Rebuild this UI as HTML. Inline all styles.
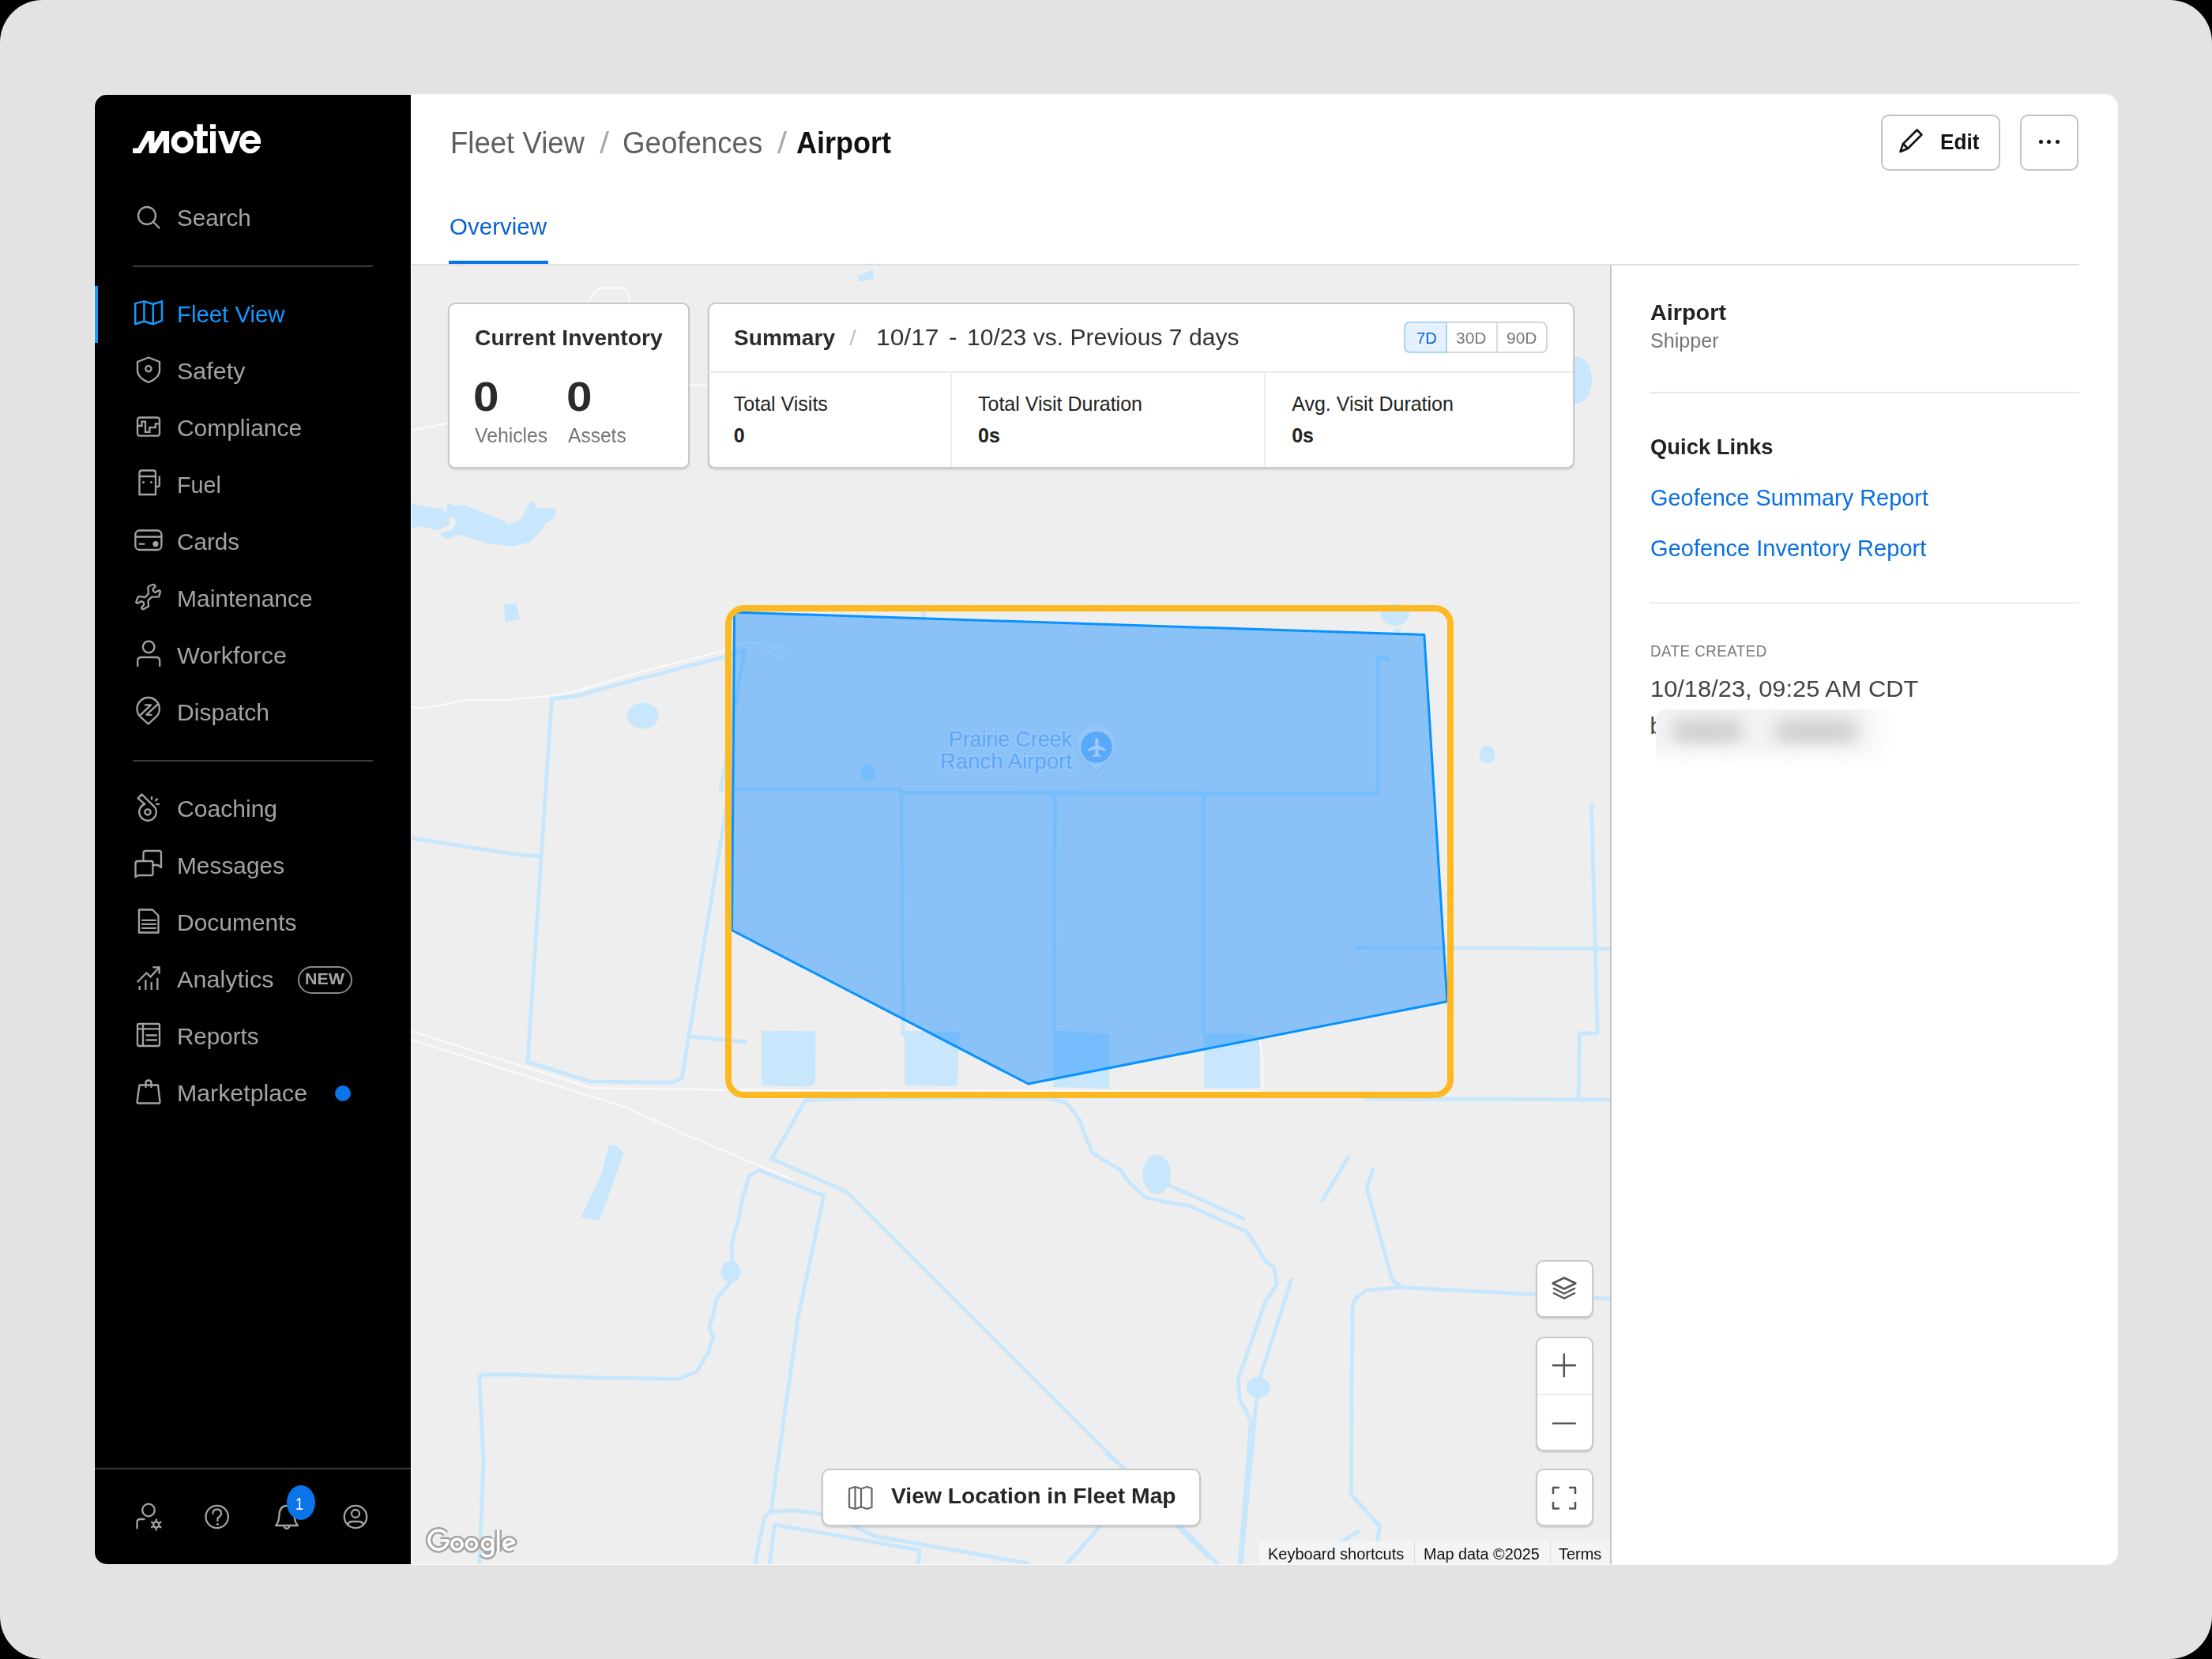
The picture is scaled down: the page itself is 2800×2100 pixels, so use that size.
<!DOCTYPE html>
<html><head><meta charset="utf-8">
<style>
*{margin:0;padding:0;box-sizing:border-box}
html,body{width:2800px;height:2100px;overflow:hidden;background:#000;font-family:"Liberation Sans",sans-serif}
.abs{position:absolute}
.t{position:absolute;white-space:nowrap;line-height:1}
svg{overflow:visible}
</style></head><body>
<div class="abs" style="left:0;top:0;width:2800px;height:2100px;background:#e3e3e3;border-radius:54px"></div>
<div class="abs" style="left:119px;top:119px;width:2562px;height:1862px;background:#fafafa;border-radius:16px"></div>
<div class="abs" style="left:120px;top:120px;width:2560px;height:1860px;background:#fff;border-radius:15px;overflow:hidden"></div>
<div class="abs" style="left:120px;top:120px;width:400px;height:1860px;background:#000;border-radius:15px 0 0 15px"></div>
<svg class="abs" style="left:0;top:0" width="520" height="2100" viewBox="0 0 520 2100">
<g fill="#fff">
<polygon points="168.1,187.6 174.6,187.6 186.4,166.1 195.4,166.1 195.4,181.3 204.3,166.1 214.1,166.1 214.1,193.9 207,193.9 206.8,176.9 196.6,193.9 188.9,193.9 188.1,177.7 178.3,193.9 168.1,193.9"/>
<rect x="249.3" y="157.2" width="7.5" height="36.7"/><rect x="245.4" y="166.1" width="17.5" height="6"/><rect x="249.3" y="187.6" width="13.6" height="6.3"/>
<rect x="266" y="157.2" width="7.1" height="5.8"/><rect x="266" y="166.1" width="7.1" height="27.8"/>
<polygon points="276,166.1 284.1,166.1 290.2,183.4 296.3,166.1 304.4,166.1 293.9,193.9 286.1,193.9"/>
</g>
<circle cx="230.8" cy="180" r="10.5" fill="none" stroke="#fff" stroke-width="7.4"/>
<ellipse cx="316.7" cy="179.9" rx="13.5" ry="14.4" fill="#fff"/>
<path d="M311,176.9 A5.85,4.9 0 0 1 322.7,176.9 Z" fill="#000"/>
<path d="M311,182.1 L331,182.1 L331,185 L322.2,185 A5.85,5.7 0 0 1 311,182.1 Z" fill="#000"/>
<g fill="none" stroke="#a3a3a3" stroke-width="2.3" stroke-linejoin="round" stroke-linecap="round"><circle cx="186" cy="273" r="11"/><line x1="194.5" y1="281.5" x2="201.5" y2="288.5"/></g>
<g fill="none" stroke="#1499ff" stroke-width="2.5" stroke-linejoin="round"><polygon points="171.2,384.1 182.4,381.4 193.8,385 205,381.4 205,405.8 193.8,410.3 182.4,406.7 171.2,410.3"/><line x1="182.4" y1="381.4" x2="182.4" y2="406.7"/><line x1="193.8" y1="385" x2="193.8" y2="410.3"/></g>
<g fill="none" stroke="#a3a3a3" stroke-width="2.3" stroke-linejoin="round" stroke-linecap="round"><path d="M174,458 L188,452.5 L202,458 L202,469 Q202,478 188,484 Q174,478 174,469 Z"/><circle cx="187.9" cy="466.8" r="3.6"/></g>
<g fill="none" stroke="#a3a3a3" stroke-width="2.3" stroke-linejoin="round" stroke-linecap="round"><rect x="174" y="528.5" width="28" height="23.2" rx="3"/><polyline points="174.2,539 179.5,539 179.5,533.7 184,533.7 184,546.8 189.4,546.8 189.4,541.2 196.8,541.2 196.8,536.4 201.8,536.4" stroke-linejoin="miter" stroke-linecap="butt"/></g>
<g fill="none" stroke="#a3a3a3" stroke-width="2.3" stroke-linejoin="round" stroke-linecap="round"><path d="M176.5,626 L176.5,598.5 Q176.5,595.5 179.5,595.5 L194,595.5 Q197,595.5 197,598.5 L197,626 Z" stroke-linejoin="miter"/><line x1="176.5" y1="603" x2="197" y2="603"/><path d="M197,616 L199.5,616 Q201.8,616 201.8,613.5 L201.8,602.5" stroke-linecap="butt"/></g>
<g fill="#a3a3a3"><rect x="180.2" y="609.2" width="2.6" height="2.6"/><rect x="190.2" y="609.2" width="2.6" height="2.6"/></g>
<g fill="none" stroke="#a3a3a3" stroke-width="2.3" stroke-linejoin="round" stroke-linecap="round"><rect x="171.4" y="671.5" width="33" height="24.5" rx="5"/><line x1="171.4" y1="679.5" x2="204.4" y2="679.5"/><line x1="176.5" y1="688.6" x2="182.5" y2="688.6"/></g><circle cx="196.9" cy="688.6" r="3.6" fill="#a3a3a3"/>
<g fill="none" stroke="#a3a3a3" stroke-width="2.3" stroke-linejoin="round" stroke-linecap="round"><path d="M194.4,739.8 Q196,740.5 196.8,742.2 L193.9,745.1 Q193.3,747 194.5,748.6 Q195.5,750 196.5,749.9 L200.7,747.5 Q202.5,747.2 203,748.6 L201.2,755.3 L192,755.7 L187.4,760.1 L188.1,767.6 L181.4,771.2 Q179.3,770.8 179,769.2 L181.9,765.9 Q182.6,763.3 181.6,762.5 Q180,761 178.5,761.3 L174.4,763.5 Q172.5,763.5 172.2,762.5 L174.2,756.5 Q175,755 176.6,754.8 L183.6,756.2 L188.1,751.4 L187.2,743.7 Q188.4,741.5 190.6,741 Z"/></g>
<g fill="none" stroke="#a3a3a3" stroke-width="2.3" stroke-linejoin="round" stroke-linecap="round"><circle cx="188.2" cy="819" r="7.3"/><path d="M174.2,843 L174.2,836.5 Q174.2,832 178.7,832 L197.7,832 Q202.2,832 202.2,836.5 L202.2,843"/></g>
<g fill="none" stroke="#a3a3a3" stroke-width="2.3" stroke-linejoin="round" stroke-linecap="round"><path d="M187.7,916.5 L177.6,907.2 A14.2,14.2 0 1 1 197.8,907.2 Z"/><path d="M178,904.8 L190.5,892.9 M184,892.4 L191,892.4 M185.6,904.4 L199.4,891.8 M185.6,904.8 L191.6,904.8"/></g>
<g fill="none" stroke="#a3a3a3" stroke-width="2.3" stroke-linejoin="round" stroke-linecap="butt"><path d="M174.6,1010.4 L179.5,1005.5 L195.8,1021.6 A10.8,10.8 0 1 1 183.2,1017.8 Z"/><circle cx="187" cy="1027.9" r="3.6"/><line x1="192" y1="1008.2" x2="192" y2="1012.6"/><line x1="196.3" y1="1014" x2="199.6" y2="1010.7"/><line x1="197.4" y1="1017.8" x2="201.8" y2="1017.8"/></g>
<g fill="none" stroke="#a3a3a3" stroke-width="2.3" stroke-linejoin="round" stroke-linecap="round"><path d="M181.5,1090 L181.5,1080 Q181.5,1077 184.5,1077 L201.5,1077 Q204,1077 204,1079.5 L204,1098 L200,1095 L193,1095"/><path d="M171.5,1110 L171.5,1093 Q171.5,1090 174.5,1090 L191.5,1090 Q193.5,1090 193.5,1092 L193.5,1106 Q193.5,1108 191.5,1108 L175,1108 Z"/></g>
<g fill="none" stroke="#a3a3a3" stroke-width="2.3" stroke-linejoin="round" stroke-linecap="round"><path d="M176,1180.5 L176,1151.5 L193,1151.5 L200.5,1159 L200.5,1180.5 Z"/><line x1="180" y1="1164.8" x2="197" y2="1164.8"/><line x1="180" y1="1169.8" x2="197" y2="1169.8"/><line x1="180" y1="1174.8" x2="197" y2="1174.8"/></g>
<g fill="none" stroke="#a3a3a3" stroke-width="2.3" stroke-linejoin="round" stroke-linecap="butt"><polyline points="173.7,1243.2 185.5,1231.5 190.5,1236.5 200.8,1225.2" stroke-linejoin="miter"/><polyline points="193.2,1224.4 201.6,1224.4 201.6,1232.8" stroke-linejoin="miter"/><line x1="176.7" y1="1248" x2="176.7" y2="1253"/><line x1="184.4" y1="1240.4" x2="184.4" y2="1253"/><line x1="191.7" y1="1243.2" x2="191.7" y2="1253"/><line x1="199.3" y1="1238" x2="199.3" y2="1253"/></g>
<g fill="none" stroke="#a3a3a3" stroke-width="2.3" stroke-linejoin="round" stroke-linecap="round"><rect x="174" y="1296" width="28" height="28" rx="2"/><line x1="174" y1="1302.3" x2="202" y2="1302.3"/><line x1="181" y1="1296" x2="181" y2="1324"/><line x1="185.5" y1="1310.5" x2="198" y2="1310.5"/><line x1="185.5" y1="1316.5" x2="198" y2="1316.5"/></g>
<g fill="none" stroke="#a3a3a3" stroke-width="2.3" stroke-linejoin="round" stroke-linecap="round"><path d="M176.5,1373.5 L200,1373.5 L202.5,1395 Q202.5,1396.5 201,1396.5 L175,1396.5 Q173.5,1396.5 173.5,1395 Z"/><path d="M184.5,1376 L184.5,1371 Q184.5,1367.5 188,1367.5 Q191.5,1367.5 191.5,1371 L191.5,1376"/></g>
<g fill="none" stroke="#a3a3a3" stroke-width="2.3" stroke-linejoin="round" stroke-linecap="round"><circle cx="188" cy="1911.5" r="7.8"/><path d="M173.5,1934.5 L173.5,1927 Q173.5,1923 177.5,1923 L182.5,1923"/></g>
<g fill="none" stroke="#a3a3a3" stroke-width="2.3"><circle cx="197.7" cy="1930" r="3.6"/></g>
<g stroke="#a3a3a3" stroke-width="2.3" stroke-linecap="round"><line x1="200.82" y1="1931.80" x2="203.42" y2="1933.30"/><line x1="197.70" y1="1933.60" x2="197.70" y2="1936.60"/><line x1="194.58" y1="1931.80" x2="191.98" y2="1933.30"/><line x1="194.58" y1="1928.20" x2="191.98" y2="1926.70"/><line x1="197.70" y1="1926.40" x2="197.70" y2="1923.40"/><line x1="200.82" y1="1928.20" x2="203.42" y2="1926.70"/></g>
<g fill="none" stroke="#a3a3a3" stroke-width="2.3" stroke-linejoin="round" stroke-linecap="round"><circle cx="274.7" cy="1920" r="14.2"/><path d="M269.5,1916 Q269.5,1910.5 274.7,1910.5 Q280,1910.5 280,1915.5 Q280,1919 275.5,1921.5 L275.5,1925"/></g><circle cx="275.5" cy="1929.5" r="1.6" fill="#a3a3a3"/>
<g fill="none" stroke="#a3a3a3" stroke-width="2.3" stroke-linejoin="round" stroke-linecap="round"><path d="M349,1931 Q352.5,1927.5 353,1922 L353.5,1917 Q354.5,1906 363,1906 Q371.5,1906 372.5,1917 L373,1922 Q373.5,1927.5 377,1931 Z"/><path d="M359.5,1931.5 Q360.5,1935 363,1935 Q365.5,1935 366.5,1931.5"/></g>
<g fill="none" stroke="#a3a3a3" stroke-width="2.3" stroke-linejoin="round" stroke-linecap="round"><circle cx="450" cy="1920" r="14.2"/><circle cx="450" cy="1916" r="5"/><path d="M440,1930.5 Q441,1926 446,1926 L454,1926 Q459,1926 460,1930.5"/></g>
</svg>
<div class="t" style="left:224.30px;top:261.65px;font-size:29.00px;color:#a3a3a3;transform:scaleX(1.0208);transform-origin:0 0;">Search</div>
<div class="abs" style="left:168.00px;top:336.00px;width:304.00px;height:2.00px;background:#3a3a3a;"></div>
<div class="abs" style="left:120.00px;top:362.00px;width:4.00px;height:72.00px;background:#1499ff;"></div>
<div class="t" style="left:224.30px;top:383.65px;font-size:29.00px;color:#1499ff;transform:scaleX(1.0121);transform-origin:0 0;">Fleet View</div>
<div class="t" style="left:224.30px;top:455.75px;font-size:29.00px;color:#a3a3a3;transform:scaleX(1.0509);transform-origin:0 0;">Safety</div>
<div class="t" style="left:224.30px;top:527.75px;font-size:29.00px;color:#a3a3a3;transform:scaleX(1.0324);transform-origin:0 0;">Compliance</div>
<div class="t" style="left:224.30px;top:599.65px;font-size:29.00px;color:#a3a3a3;transform:scaleX(0.9926);transform-origin:0 0;">Fuel</div>
<div class="t" style="left:224.30px;top:671.65px;font-size:29.00px;color:#a3a3a3;transform:scaleX(1.0225);transform-origin:0 0;">Cards</div>
<div class="t" style="left:224.30px;top:743.75px;font-size:29.00px;color:#a3a3a3;transform:scaleX(1.0340);transform-origin:0 0;">Maintenance</div>
<div class="t" style="left:224.30px;top:815.65px;font-size:29.00px;color:#a3a3a3;transform:scaleX(1.0569);transform-origin:0 0;">Workforce</div>
<div class="t" style="left:224.30px;top:887.75px;font-size:29.00px;color:#a3a3a3;transform:scaleX(1.0378);transform-origin:0 0;">Dispatch</div>
<div class="t" style="left:224.30px;top:1009.55px;font-size:29.00px;color:#a3a3a3;transform:scaleX(1.0373);transform-origin:0 0;">Coaching</div>
<div class="t" style="left:224.30px;top:1081.55px;font-size:29.00px;color:#a3a3a3;transform:scaleX(1.0297);transform-origin:0 0;">Messages</div>
<div class="t" style="left:224.30px;top:1153.65px;font-size:29.00px;color:#a3a3a3;transform:scaleX(1.0329);transform-origin:0 0;">Documents</div>
<div class="t" style="left:224.30px;top:1225.55px;font-size:29.00px;color:#a3a3a3;transform:scaleX(1.0556);transform-origin:0 0;">Analytics</div>
<div class="t" style="left:224.30px;top:1297.65px;font-size:29.00px;color:#a3a3a3;transform:scaleX(1.0202);transform-origin:0 0;">Reports</div>
<div class="t" style="left:224.30px;top:1369.65px;font-size:29.00px;color:#a3a3a3;transform:scaleX(1.0452);transform-origin:0 0;">Marketplace</div>
<div class="abs" style="left:168.00px;top:962.00px;width:304.00px;height:2.00px;background:#3a3a3a;"></div>
<div class="abs" style="left:377px;top:1222.5px;width:68.5px;height:35.5px;border:2px solid #8a8a8a;border-radius:18px"></div>
<div class="t" style="left:385.50px;top:1229.37px;font-size:20.00px;color:#a3a3a3;font-weight:700;transform:scaleX(1.0716);transform-origin:0 0;">NEW</div>
<div class="abs" style="left:423.7px;top:1374px;width:20px;height:20px;border-radius:50%;background:#0a74e8"></div>
<div class="abs" style="left:120.00px;top:1858.00px;width:400.00px;height:2.00px;background:#3a3a3a;"></div>
<div class="abs" style="left:363px;top:1880px;width:36px;height:44px;border-radius:50%;background:#0a74e8"></div>
<div class="t" style="left:373.50px;top:1892.87px;font-size:22.00px;color:#fff;transform:scaleX(0.8173);transform-origin:0 0;">1</div>
<div class="t" style="left:569.50px;top:161.73px;font-size:38.00px;color:#5f5f5f;transform:scaleX(0.9620);transform-origin:0 0;">Fleet View</div>
<div class="t" style="left:759.00px;top:161.73px;font-size:38.00px;color:#ababab;transform:scaleX(1.1367);transform-origin:0 0;">/</div>
<div class="t" style="left:787.50px;top:161.73px;font-size:38.00px;color:#5f5f5f;transform:scaleX(0.9642);transform-origin:0 0;">Geofences</div>
<div class="t" style="left:984.00px;top:161.73px;font-size:38.00px;color:#ababab;transform:scaleX(1.1367);transform-origin:0 0;">/</div>
<div class="t" style="left:1008.00px;top:161.73px;font-size:38.00px;color:#111111;font-weight:700;transform:scaleX(0.9474);transform-origin:0 0;">Airport</div>
<div class="t" style="left:569.00px;top:272.65px;font-size:29.00px;color:#0b5fd2;transform:scaleX(1.0177);transform-origin:0 0;">Overview</div>
<div class="abs" style="left:521.00px;top:333.50px;width:2111.00px;height:2.00px;background:#dedede;"></div>
<div class="abs" style="left:568.00px;top:330.00px;width:126.00px;height:4.00px;background:#0a72e8;"></div>
<div class="abs" style="left:2380.5px;top:144.5px;width:151px;height:71px;border:2px solid #c4c4c4;border-radius:10px"></div>
<svg class="abs" style="left:2380px;top:140px" width="80" height="80" viewBox="2380 140 80 80"><g fill="none" stroke="#111" stroke-width="2.6" stroke-linejoin="round"><path d="M2405.5,192 L2409,182 L2426.5,164.5 L2432.5,170.5 L2415,188 Z"/><line x1="2409" y1="182" x2="2415" y2="188"/></g></svg>
<div class="t" style="left:2456.00px;top:165.89px;font-size:28.00px;color:#111111;font-weight:700;transform:scaleX(0.9341);transform-origin:0 0;">Edit</div>
<div class="abs" style="left:2556.5px;top:144.5px;width:74.5px;height:71px;border:2px solid #c4c4c4;border-radius:10px"></div>
<div class="abs" style="left:2580.9px;top:177.3px;width:5px;height:5px;border-radius:50%;background:#111"></div>
<div class="abs" style="left:2591.4px;top:177.3px;width:5px;height:5px;border-radius:50%;background:#111"></div>
<div class="abs" style="left:2601.7px;top:177.3px;width:5px;height:5px;border-radius:50%;background:#111"></div>
<div class="abs" style="left:521.00px;top:335.50px;width:1517.00px;height:1644.50px;background:#eeeeee;"></div>
<svg class="abs" style="left:521px;top:336px;overflow:hidden" width="1517" height="1644" viewBox="521 336 1517 1644">
<g fill="#c8e7fc"><polygon points="520.0,637.2 551.5,643.7 556.7,642.4 564.0,648.2 567.2,636.7 576.4,640.3 585.5,638.5 632.7,656.9 644.5,663.9 659.0,657.6 672.0,634.6 679.4,637.2 677.3,643.0 701.0,643.2 704.3,647.2 702.7,655.5 690.4,662.9 687.8,668.1 671.3,685.7 649.8,691.7 619.6,688.3 579.0,676.5 566.7,683.0 556.7,676.5 559.3,674.4 572.4,670.0 577.2,662.9 575.0,655.5 568.5,653.5 569.3,664.0 553.6,671.8 535.7,666.6 520.0,667.9"/><polygon points="638,765.7 653.7,763.6 658.2,784 639.3,788"/><ellipse cx="813.7" cy="906" rx="20" ry="16.5"/><polygon points="770.7,1448.7 780.4,1450.5 789.5,1459.6 758.7,1545.7 735.2,1541 760.6,1488.5"/><polygon points="1085,350 1105,341 1106,353 1088,357"/><ellipse cx="1995" cy="481" rx="20" ry="30"/><ellipse cx="1882.5" cy="955.3" rx="10" ry="11"/><ellipse cx="1766" cy="778" rx="18" ry="14"/><ellipse cx="1464.3" cy="1486.7" rx="18" ry="25"/><ellipse cx="925.1" cy="1609.7" rx="12" ry="14"/><ellipse cx="1592.7" cy="1756" rx="15" ry="13"/><ellipse cx="1099" cy="978" rx="9.5" ry="11"/><rect x="1765" y="796" width="8" height="7"/><rect x="1166" y="774" width="6" height="8"/><polygon points="964.2,1304.7 1032.4,1305.5 1032,1370 1025,1376 964.2,1374"/><polygon points="1145.2,1304.7 1214.7,1306 1212,1375 1145.2,1374"/><polygon points="1333.2,1304 1404.3,1309 1404.3,1378 1333.2,1376"/><polygon points="1524.1,1308 1580,1308 1594.4,1315 1595,1377 1524.1,1377"/></g>
<g fill="none" stroke="#fbfbfb" stroke-width="2" stroke-linejoin="round"><polyline points="520,895 538.4,896.2 593.4,885.5 640.6,886.3 690.4,881.6 714,878.4 735,873.2 795.3,854.8 918.5,822.8"/><polyline points="520,1305.2 748,1377 921.5,1379.8 1594,1381"/><polyline points="520,1316 791.3,1401.5 863.6,1434.3 1004.7,1494"/><polyline points="520,544.9 567.3,535.7"/><polyline points="871.8,487.2 895.6,488.1"/><path d="M744.5,382.7 C750,372 755,365 762,364.4 L789.4,364.4 Q795,366 797.6,382.7"/><polyline points="1594.4,1315 1598,1340 1598,1381"/><path d="M929,818 Q940,812 960,814 L979,829 Q985,833 991,830 Q996,825 990,820 Q984,816 972,820" stroke-width="1.6"/></g>
<g fill="none" stroke="#c8e7fc" stroke-width="5" stroke-linejoin="round" stroke-linecap="round"><polyline points="942.3,822.6 918.5,831.2 821.5,856.1 782.2,866.6 735.0,879.7 698.3,885.0 667.9,1344.5 747.9,1369.0 851.0,1370.3 863.2,1364.9 929.0,965.0"/><polyline points="942.3,822.6 912.4,1000.7"/><polyline points="912.4,998.7 1138.7,998.7 1141.0,1003.0 1744.2,1004.8 1744.2,832.5 1757.0,834.0"/><polyline points="1140.9,1003.0 1143.0,1309.9"/><polyline points="1335.3,1005.0 1334.0,1307.7"/><polyline points="1523.7,1005.0 1523.7,1308.0"/><polyline points="520.0,1061.0 653.0,1081.4 682.8,1084.0"/><polyline points="872.7,1312.0 943.2,1318.8"/><polyline points="976.5,1466.8 993.9,1437.9 1019.2,1392.7 1049.0,1390.7 1325.0,1389.0 1350.4,1396.3 1366.7,1418.0 1372.1,1434.2 1383.0,1459.6 1397.4,1468.6 1419.1,1481.3 1428.2,1495.7 1449.8,1515.6 1473.4,1521.0 1505.9,1526.5 1578.2,1559.0 1589.0,1575.3 1601.7,1597.0 1612.6,1604.2 1616.2,1626.0 1601.7,1647.6 1567.4,1745.2 1569.2,1770.5 1583.6,1799.5 1569.2,1980.0"/><polyline points="976.5,1466.8 1071.6,1508.4 1422.7,1859.1 1542.0,1980.0"/><polyline points="1350.4,1980.0 1391.7,1932.7"/><polyline points="961.3,1481.3 1042.7,1513.8 1008.3,1676.6 1008.3,1683.5 976.0,1912.0 967.6,1920.5 955.7,1980.0"/><polyline points="961.3,1481.3 948.6,1488.5 939.6,1517.5 936.0,1539.0 928.8,1564.5 925.9,1577.0 927.0,1595.0 925.1,1609.7 923.3,1624.2 907.0,1644.0 903.4,1662.0 898.0,1680.0 902.7,1692.9 896.2,1712.8 881.7,1736.3 860.0,1745.4 737.0,1743.5 653.8,1740.0 612.2,1740.0 606.8,1741.7 612.2,1850.3 606.8,1980.0"/><polyline points="976.5,1913.5 1004.7,1911.7 1041.0,1917.0"/><polyline points="974.1,1980.0 980.5,1929.7 1164.0,1962.3 1162.2,1980.0"/><polyline points="1080.8,1931.5 1106.2,1944.2 1300.0,1978.6"/><polyline points="1391.7,1932.7 1351.0,1980.0"/><polyline points="1491.0,1932.7 1530.0,1971.0"/><polyline points="1400.7,1840.0 1423.3,1859.2"/><polyline points="1477.0,1499.3 1574.6,1542.7"/><polyline points="1706.6,1465.0 1674.0,1519.2"/><polyline points="1737.3,1481.3 1730.1,1504.8 1762.6,1620.5 1775.3,1629.5 1943.4,1638.5 2040.0,1644.0"/><polyline points="1775.3,1629.5 1730.1,1633.1 1715.6,1644.0 1712.0,1654.8 1710.2,1891.7 1746.4,1931.5 1739.2,1980.0"/><polyline points="1634.3,1620.5 1594.5,1745.2 1590.9,1766.9 1571.0,1980.0"/><polyline points="1719.5,1938.7 1650.8,1980.0"/><polyline points="2014.6,1018.0 2022.0,1308.0 1999.4,1308.0 1998.2,1388.0"/><polyline points="1718.0,1199.2 2038.0,1201.0"/><polyline points="1049.0,1388.0 1729.0,1388.0"/><polyline points="1729.0,1390.5 2038.0,1392.0"/></g>
</svg>
<svg class="abs" style="left:521px;top:336px;overflow:hidden" width="1517" height="1644" viewBox="521 336 1517 1644">
<polygon points="929.5,775 1802.8,803.4 1831.9,1267.8 1301.5,1372 926.5,1177.5" fill="rgba(30,144,255,0.48)" stroke="#0692ff" stroke-width="3" stroke-linejoin="round"/>
<path d="M1388,978 L1371.5,962 A24.5,24.5 0 1 1 1404.5,962 Z" fill="#7fb4ea" opacity="0.6" transform="translate(0,1.5)"/><path d="M1388,976 L1371,960.5 A24.4,24.4 0 1 1 1405,960.5 Z" fill="#92c5fa"/><circle cx="1388" cy="945.8" r="19.8" fill="#5aa9f8"/><g fill="#9ccbfa"><path d="M1388.3,934 Q1390.3,934 1390.3,936.5 L1390.3,943.5 L1399.5,948.5 L1399.5,951 L1390.3,948.5 L1390.3,954.5 L1393.5,956.5 L1393.5,958.5 L1388.3,957.3 L1383.1,958.5 L1383.1,956.5 L1386.3,954.5 L1386.3,948.5 L1377.1,951 L1377.1,948.5 L1386.3,943.5 L1386.3,936.5 Q1386.3,934 1388.3,934 Z"/></g>
<g font-family="Liberation Sans" font-size="28.5" fill="#5ea8f6" stroke="#93c5fa" stroke-width="5" stroke-linejoin="round" paint-order="stroke" text-anchor="end"><text x="1356.8" y="945.2" textLength="156" lengthAdjust="spacingAndGlyphs">Prairie Creek</text><text x="1356.8" y="973.1" textLength="167" lengthAdjust="spacingAndGlyphs">Ranch Airport</text></g>
<rect x="922" y="770" width="914" height="616" rx="19.5" fill="none" stroke="#fdb921" stroke-width="8"/>
</svg>
<div style="position:absolute;background:#fff;border:2px solid #c8c8c8;border-radius:9px;box-shadow:0 2px 2px rgba(0,0,0,0.12);left:567.3px;top:382.7px;width:305.4px;height:210px"></div>
<div class="t" style="left:600.60px;top:414.29px;font-size:28.00px;color:#2b2b2b;font-weight:700;transform:scaleX(1.0126);transform-origin:0 0;">Current Inventory</div>
<div class="t" style="left:599.40px;top:477.09px;font-size:51.50px;color:#2b2b2b;font-weight:700;transform:scaleX(1.1347);transform-origin:0 0;">0</div>
<div class="t" style="left:717.20px;top:477.09px;font-size:51.50px;color:#2b2b2b;font-weight:700;transform:scaleX(1.1347);transform-origin:0 0;">0</div>
<div class="t" style="left:601.00px;top:538.73px;font-size:25.00px;color:#767676;transform:scaleX(0.9901);transform-origin:0 0;">Vehicles</div>
<div class="t" style="left:718.80px;top:538.73px;font-size:25.00px;color:#767676;transform:scaleX(0.9823);transform-origin:0 0;">Assets</div>
<div style="position:absolute;background:#fff;border:2px solid #c8c8c8;border-radius:9px;box-shadow:0 2px 2px rgba(0,0,0,0.12);left:895.5px;top:382.7px;width:1097px;height:210px"></div>
<div class="abs" style="left:897.00px;top:470.00px;width:1094.00px;height:2.00px;background:#ececec;"></div>
<div class="abs" style="left:1202.60px;top:471.00px;width:2.00px;height:120.00px;background:#ececec;"></div>
<div class="abs" style="left:1600.00px;top:471.00px;width:2.00px;height:120.00px;background:#ececec;"></div>
<div class="t" style="left:928.80px;top:414.09px;font-size:28.00px;color:#2b2b2b;font-weight:700;transform:scaleX(1.0030);transform-origin:0 0;">Summary</div>
<div class="t" style="left:1075.00px;top:414.09px;font-size:28.00px;color:#c4c4c4;transform:scaleX(1.1570);transform-origin:0 0;">/</div>
<div class="t" style="left:1109.00px;top:413.25px;font-size:29.00px;color:#333333;transform:scaleX(1.0955);transform-origin:0 0;">10/17</div>
<div class="t" style="left:1201.00px;top:413.25px;font-size:29.00px;color:#333333;transform:scaleX(1.0871);transform-origin:0 0;">-</div>
<div class="t" style="left:1223.50px;top:413.25px;font-size:29.00px;color:#333333;transform:scaleX(1.0374);transform-origin:0 0;">10/23 vs. Previous 7 days</div>
<div class="abs" style="left:1777.4px;top:407.4px;width:181.6px;height:39.2px;border:2px solid #d6d6d6;border-radius:8px"></div>
<div class="abs" style="left:1777.4px;top:407.4px;width:54.5px;height:39.2px;border:2px solid #a8d3fb;border-radius:8px 0 0 8px;background:#e5f2fe"></div>
<div class="abs" style="left:1894.00px;top:409.00px;width:2.00px;height:36.00px;background:#dcdcdc;"></div>
<div class="t" style="left:1792.50px;top:416.52px;font-size:21.00px;color:#0b5fd2;transform:scaleX(0.9611);transform-origin:0 0;">7D</div>
<div class="t" style="left:1843.30px;top:416.52px;font-size:21.00px;color:#7a7a7a;transform:scaleX(0.9993);transform-origin:0 0;">30D</div>
<div class="t" style="left:1907.00px;top:416.52px;font-size:21.00px;color:#7a7a7a;transform:scaleX(0.9993);transform-origin:0 0;">90D</div>
<div class="t" style="left:928.80px;top:498.53px;font-size:25.00px;color:#222222;">Total Visits</div>
<div class="t" style="left:1238.00px;top:498.53px;font-size:25.00px;color:#222222;">Total Visit Duration</div>
<div class="t" style="left:1635.20px;top:498.53px;font-size:25.00px;color:#222222;">Avg. Visit Duration</div>
<div class="t" style="left:928.80px;top:538.73px;font-size:25.00px;color:#222222;font-weight:700;">0</div>
<div class="t" style="left:1238.00px;top:538.73px;font-size:25.00px;color:#222222;font-weight:700;">0s</div>
<div class="t" style="left:1635.20px;top:538.73px;font-size:25.00px;color:#222222;font-weight:700;">0s</div>
<div style="position:absolute;background:#fff;border:2px solid #c8c8c8;border-radius:10px;box-shadow:0 2px 2px rgba(0,0,0,0.12);left:1943.6px;top:1595.3px;width:73px;height:73px"></div>
<div style="position:absolute;background:#fff;border:2px solid #c8c8c8;border-radius:10px;box-shadow:0 2px 2px rgba(0,0,0,0.12);left:1943.6px;top:1691.6px;width:73px;height:145px"></div>
<div class="abs" style="left:1945.60px;top:1764.00px;width:69.00px;height:1.50px;background:#ececec;"></div>
<div style="position:absolute;background:#fff;border:2px solid #c8c8c8;border-radius:10px;box-shadow:0 2px 2px rgba(0,0,0,0.12);left:1943.6px;top:1859.3px;width:73px;height:73px"></div>
<div style="position:absolute;background:#fff;border:2px solid #c8c8c8;border-radius:10px;box-shadow:0 2px 2px rgba(0,0,0,0.12);left:1040.2px;top:1859.2px;width:480px;height:73px"></div>
<svg class="abs" style="left:1940px;top:1590px" width="80" height="350" viewBox="1940 1590 80 350"><g fill="none" stroke="#555" stroke-width="2.5" stroke-linejoin="round">
<path d="M1980,1617.5 L1994.5,1624.5 L1980,1631.5 L1965.5,1624.5 Z"/><path d="M1966,1630.5 L1980,1637.5 L1994,1630.5"/><path d="M1966,1636.5 L1980,1643.5 L1994,1636.5"/>
<line x1="1964.8" y1="1728.3" x2="1994.8" y2="1728.3"/><line x1="1979.8" y1="1713.3" x2="1979.8" y2="1743.3"/>
<line x1="1964.8" y1="1801.8" x2="1994.8" y2="1801.8"/>
<path d="M1966,1891 L1966,1883 L1974,1883 M1986,1883 L1994,1883 L1994,1891 M1994,1901 L1994,1909.5 L1986,1909.5 M1974,1909.5 L1966,1909.5 L1966,1901"/>
</g></svg>
<svg class="abs" style="left:1070px;top:1875px" width="40" height="40" viewBox="1070 1875 40 40"><g fill="none" stroke="#666" stroke-width="2.2" stroke-linejoin="round"><path d="M1075,1884.5 L1082.5,1882 L1090,1884.5 L1097.5,1882 L1103.5,1884 L1103.5,1908 L1097.5,1910 L1090,1907.5 L1082.5,1910 L1075,1908 Z"/><line x1="1082.5" y1="1882" x2="1082.5" y2="1910"/><line x1="1090" y1="1884.5" x2="1090" y2="1907.5"/></g></svg>
<div class="t" style="left:1127.60px;top:1880.29px;font-size:28.00px;color:#262626;font-weight:700;transform:scaleX(1.0092);transform-origin:0 0;">View Location in Fleet Map</div>
<div class="abs" style="left:1593.80px;top:1951.20px;width:444.20px;height:28.80px;background:rgba(245,245,245,0.82);"></div>
<div class="abs" style="left:1790.00px;top:1951.20px;width:1.00px;height:28.80px;background:rgba(220,220,220,0.9);"></div>
<div class="abs" style="left:1962.00px;top:1951.20px;width:1.00px;height:28.80px;background:rgba(220,220,220,0.9);"></div>
<div class="t" style="left:1605.00px;top:1957.07px;font-size:20.00px;color:#111111;transform:scaleX(0.9993);transform-origin:0 0;">Keyboard shortcuts</div>
<div class="t" style="left:1802.00px;top:1957.07px;font-size:20.00px;color:#111111;transform:scaleX(0.9900);transform-origin:0 0;">Map data ©2025</div>
<div class="t" style="left:1973.00px;top:1957.07px;font-size:20.00px;color:#111111;transform:scaleX(0.9973);transform-origin:0 0;">Terms</div>
<svg class="abs" style="left:530px;top:1920px" width="140" height="60" viewBox="530 1920 140 60"><g fill="none" stroke="#a3a3a3" stroke-width="8.6" stroke-linejoin="round"><path d="M564,1941.3 A12,12 0 1 0 567,1950 L557.5,1950"/><circle cx="578.5" cy="1954.8" r="6.6"/><circle cx="596.9" cy="1954.8" r="6.6"/><circle cx="617.1" cy="1954.8" r="6.6"/><path d="M623.7,1947.5 L623.7,1963 Q623.7,1969.8 617,1969.8 Q612.3,1969.8 610.3,1966.5"/><line x1="630.7" y1="1936.5" x2="630.7" y2="1964"/><path d="M638,1957 L650.6,1952.6 A6.6,6.6 0 1 0 648.6,1960"/></g><g fill="none" stroke="#fff" stroke-width="3.6" stroke-linejoin="round"><path d="M564,1941.3 A12,12 0 1 0 567,1950 L557.5,1950"/><circle cx="578.5" cy="1954.8" r="6.6"/><circle cx="596.9" cy="1954.8" r="6.6"/><circle cx="617.1" cy="1954.8" r="6.6"/><path d="M623.7,1947.5 L623.7,1963 Q623.7,1969.8 617,1969.8 Q612.3,1969.8 610.3,1966.5"/><line x1="630.7" y1="1936.5" x2="630.7" y2="1964"/><path d="M638,1957 L650.6,1952.6 A6.6,6.6 0 1 0 648.6,1960"/></g></svg>
<div class="abs" style="left:2038.00px;top:336.00px;width:2.00px;height:1644.00px;background:#c6c6c6;"></div>
<div class="t" style="left:2088.60px;top:382.29px;font-size:28.00px;color:#222222;font-weight:700;transform:scaleX(1.0287);transform-origin:0 0;">Airport</div>
<div class="t" style="left:2088.60px;top:418.83px;font-size:25.00px;color:#767676;transform:scaleX(1.0038);transform-origin:0 0;">Shipper</div>
<div class="abs" style="left:2088.00px;top:496.00px;width:544.00px;height:2.00px;background:#e8e8e8;"></div>
<div class="t" style="left:2088.60px;top:552.29px;font-size:28.00px;color:#222222;font-weight:700;transform:scaleX(0.9797);transform-origin:0 0;">Quick Links</div>
<div class="t" style="left:2088.60px;top:616.25px;font-size:29.00px;color:#0a6fe0;transform:scaleX(0.9972);transform-origin:0 0;">Geofence Summary Report</div>
<div class="t" style="left:2088.60px;top:679.85px;font-size:29.00px;color:#0a6fe0;transform:scaleX(1.0034);transform-origin:0 0;">Geofence Inventory Report</div>
<div class="abs" style="left:2088.00px;top:761.50px;width:544.00px;height:2.00px;background:#ececec;"></div>
<div class="t" style="left:2088.60px;top:813.22px;font-size:21.00px;color:#7a7a7a;letter-spacing:0.50px;transform:scaleX(0.8954);transform-origin:0 0;">DATE CREATED</div>
<div class="t" style="left:2088.60px;top:857.75px;font-size:29.00px;color:#444444;transform:scaleX(1.0633);transform-origin:0 0;">10/18/23, 09:25 AM CDT</div>
<div class="t" style="left:2088.60px;top:904.95px;font-size:29.00px;color:#444444;">b</div>
<div class="abs" style="left:2096px;top:898px;width:300px;height:75px;-webkit-mask-image:linear-gradient(to right,#000 0%,#000 85%,transparent 100%)"><div class="abs" style="left:0;top:0;width:300px;height:75px;-webkit-mask-image:linear-gradient(to bottom,#000 0%,#000 55%,transparent 100%);border-radius:12px 0 0 0;overflow:hidden;background:#f3f3f3"><div class="abs" style="left:20px;top:12px;width:90px;height:30px;border-radius:15px;background:#cfcfcf;filter:blur(10px)"></div><div class="abs" style="left:150px;top:12px;width:105px;height:30px;border-radius:15px;background:#cfcfcf;filter:blur(10px)"></div></div></div>
</body></html>
